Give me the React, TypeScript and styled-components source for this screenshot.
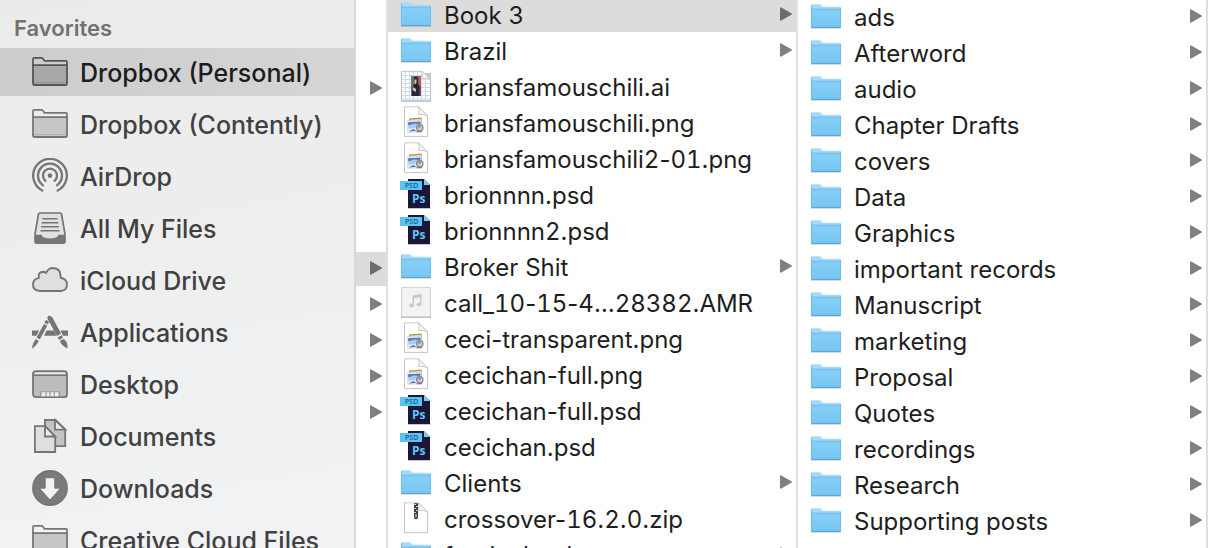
import React from "react";
import styled, { createGlobalStyle } from "styled-components";

const GlobalStyle = createGlobalStyle`
  *, *::before, *::after { box-sizing: border-box; }
  body {
    margin: 0;
    background: #fff;
    color: #232323;
    font-family: Inter, "Liberation Sans", sans-serif;
  }
`;

const Browser = styled.div`
  display: grid;
  grid-template-columns: 356px 32px minmax(0, 1fr) minmax(0, 1fr) 18px;
  height: 100vh;
  overflow: hidden;
`;

const Sidebar = styled.nav`
  overflow: hidden;
  border-right: 2px solid #d9d9da;
  background: linear-gradient(170deg, #ebebeb 0%, #eeeeee 45%, #eff1f3 75%, #f2f2f4 100%);
`;

const SidebarTitle = styled.h2`
  height: 48px;
  margin: 0;
  padding: 14px 14px 0;
  color: #717171;
  font-size: 22px;
  font-weight: 600;
  line-height: 28px;
`;

const SidebarList = styled.ul`
  display: flex;
  flex-direction: column;
  gap: 4px;
  margin: 0;
  padding: 0;
  list-style: none;
`;

const SidebarLink = styled.a<{ $active?: boolean }>`
  display: flex;
  align-items: center;
  gap: 12px;
  height: 48px;
  padding-left: 32px;
  background: ${(p) => (p.$active ? "linear-gradient(90deg, #cccccc, #d5d5d5)" : "none")};
  color: ${(p) => (p.$active ? "#1c1c1c" : "#414141")};
  text-decoration: none;
`;

const SidebarLabel = styled.span`
  padding-top: 2px;
  font-size: 25px;
  font-weight: 500;
  line-height: 32px;
  white-space: nowrap;
`;

const SidebarGlyph = styled.svg<{ $active?: boolean }>`
  flex: none;
  width: 36px;
  height: 36px;
  color: ${(p) => (p.$active ? "#555555" : "#757575")};
`;

const Column = styled.section<{ $scrolled?: boolean }>`
  display: flex;
  flex-direction: column;
  gap: 2px;
  min-width: 0;
  margin-top: ${(p) => (p.$scrolled ? "-2px" : "0")};
  overflow: hidden;
  border-right: 2px solid #dedede;
  background: #fff;
`;

const Row = styled.button<{ $selected?: boolean }>`
  display: flex;
  flex: none;
  align-items: center;
  gap: 12px;
  width: 100%;
  height: 34px;
  padding: 0 4px 0 12px;
  border: 0;
  background: ${(p) => (p.$selected ? "#dcdcdc" : "transparent")};
  color: ${(p) => (p.$selected ? "#6c6c6c" : "#7f7f7f")};
  font: inherit;
  text-align: left;
`;

const EmptyRow = styled.div`
  flex: none;
  height: 34px;
`;

const FileName = styled.span`
  flex: 1;
  min-width: 0;
  padding-top: 2px;
  overflow: hidden;
  color: #1e1e1e;
  font-size: 24px;
  line-height: 32px;
  text-overflow: ellipsis;
  white-space: nowrap;
`;

const Digits = styled.span`
  font-variant-numeric: tabular-nums;
`;

const FileGlyph = styled.svg`
  flex: none;
  width: 32px;
  height: 32px;
  margin-bottom: 2px;
`;

const ArrowGlyph = styled.svg`
  flex: none;
  width: 12px;
  height: 14px;
  margin: 0 0 2px auto;
`;

const Arrow = () => (
  <ArrowGlyph viewBox="0 0 12 14" aria-hidden="true">
    <path d="M0 1.2Q0 0 1.2.5L11.4 6.2Q12.5 7 11.4 7.8L1.2 13.5Q0 14 0 12.8Z" fill="currentColor" />
  </ArrowGlyph>
);

type Kind = "folder" | "ai" | "png" | "psd" | "amr" | "zip";

const Page = () => (
  <>
    <path d="M4 1.5H19L28.2 11V31.3H4Z" fill="#000" opacity=".12" />
    <path d="M4.5.8H18.5L27.5 10V30.4H4.5Z" fill="#fff" stroke="#bdbdbd" strokeWidth=".8" />
    <path d="M18.5.8Q20 5 18.4 8.6Q23.5 7.6 27.5 10Z" fill="#f4f4f4" stroke="#c6c6c6" strokeWidth=".9" />
  </>
);

const drawings: Record<Kind, React.ReactNode> = {
  folder: (
    <>
      <path d="M1 27.2H31V28.8H1Z" fill="#000" opacity=".18" />
      <path d="M1 5.2Q1 4.2 2 4.2H9.6Q10.4 4.2 11 5L12 6.3Q12.4 6.7 13 6.7H30Q31 6.7 31 7.7V27H1Z" fill="#a3dbf9" />
      <path d="M1 9H31V26.8Q31 27.8 30 27.8H2Q1 27.8 1 26.8Z" fill="#7cc9f4" />
      <path d="M1 9H31V17H1Z" fill="#8bd0f6" opacity=".6" />
      <path d="M1 9.1H31" stroke="#69b5e2" strokeWidth=".8" />
      <path d="M1.4 5.5V27M30.6 8V27" stroke="#6cb9e4" strokeWidth=".8" />
      <path d="M1.4 27.5H30.6" stroke="#5aa5d2" strokeWidth="1" />
      <path d="M1.4 26H30.6" stroke="#6fbeeb" strokeWidth=".7" />
    </>
  ),
  ai: (
    <>
      <path d="M1 3H31V32H1Z" fill="#000" opacity=".22" />
      <path d="M1.5 1.3H22L30.5 9.5V30.8H1.5Z" fill="#fbfdff" stroke="#bbb" strokeWidth=".9" />
      <path
        d="M5.5 2V30.5M9.5 2V30.5M13.5 2V30.5M17.5 2V30.5M21.5 2V30.5M25.5 6V30.5M2 5.5H25M2 9.5H29M2 13.5H30M2 17.5H30M2 21.5H30M2 25.5H30M2 29.3H30"
        stroke="#c3dbee"
        strokeWidth=".9"
      />
      <path d="M22 1.3Q23 5 22 8.5Q27 7.7 30.5 9.5Z" fill="#f6f6f6" stroke="#c5c5c5" strokeWidth=".8" />
      <path d="M11 6H21V26H11Z" fill="#8f4a40" />
      <path d="M11 6H14V26H11Z" fill="#6d7566" />
      <path d="M18.5 6H21V16H18.5Z" fill="#c75c48" />
      <path d="M14 7.5Q16.5 5.5 18 8.5V13L19.5 17V26H12V18L14 14Z" fill="#22283b" />
      <path d="M14.5 9.5H16.5V13L15.5 14H14.5Z" fill="#e2c4a8" />
      <path d="M13 17L16 19V22L12.5 20Z" fill="#dcbfa5" />
    </>
  ),
  png: (
    <>
      <Page />
      <g transform="rotate(-4 15 19)">
        <path d="M9.5 12H22V19H9.5Z" fill="#b0905c" />
        <path d="M10.5 13.3H21V18H10.5Z" fill="#efe7d4" />
        <path d="M7.3 14.8H21.5V26H7.3Z" fill="#f8f9fa" stroke="#c4c4c4" strokeWidth=".5" />
        <path d="M8.2 15.8H20.6V19H8.2Z" fill="#4d79c9" />
        <path d="M8.2 19L14 17.5L20.6 18.5V21.5L8.2 22.5Z" fill="#a9cbef" />
        <path d="M8.2 22.3L20.6 21.3V25H8.2Z" fill="#dfe6ee" />
        <path d="M8.2 25L13 22.8L16 25Z" fill="#5b7fb5" />
      </g>
      <circle cx="19.8" cy="21.8" r="3.2" fill="#c6c9cb" stroke="#808285" strokeWidth="1.1" />
      <path d="M18.5 21.3L20.5 20.2M16.5 25.8H22" stroke="#63666a" strokeWidth="1.1" />
    </>
  ),
  psd: (
    <>
      <path d="M8 29H30.5V31H8Z" fill="#000" opacity=".22" />
      <path d="M8 1H24L30 7V30H8Z" fill="#1b1538" />
      <path d="M24 1L30 7H24Z" fill="#6ed2fb" />
      <path d="M0 3H22V12H0Z" fill="#59c4f5" />
      <text x="5" y="10" fontFamily="Open Sans, sans-serif" fontSize="7" fontWeight="600" fill="#1d5f82">PSD</text>
      <text x="12" y="25" fontFamily="Open Sans, sans-serif" fontSize="12" fontWeight="700" fill="#5bc8f7">Ps</text>
    </>
  ),
  amr: (
    <>
      <path d="M1 3H31V32H1Z" fill="#000" opacity=".28" />
      <path d="M1.5 1.5H30.5V30.8H1.5Z" fill="#f3f3f3" stroke="#cfcfcf" strokeWidth=".9" />
      <path d="M13.3 19V10.2L20.8 8.8V18" fill="none" stroke="#c8c8c8" strokeWidth="1.5" />
      <path d="M13 11.5L21 10" stroke="#c8c8c8" strokeWidth="2" />
      <ellipse cx="11.5" cy="19.5" rx="2.4" ry="1.9" fill="#cacaca" />
      <ellipse cx="19" cy="18.3" rx="2.4" ry="1.9" fill="#cacaca" />
    </>
  ),
  zip: (
    <>
      <Page />
      <path d="M14 1.2H18V14.5Q18 17.3 16 17.3Q14 17.3 14 14.5Z" fill="#3c3c3c" />
      <path d="M14.3 2.5H16M16 4.5H17.7M14.3 6.5H16M16 8.5H17.7M14.3 10.5H16" stroke="#d9d9d9" strokeWidth="1" />
      <path d="M15.4 12H16.6V15.3H15.4Z" fill="#d5d5d5" />
    </>
  ),
};

const line = { fill: "none", stroke: "currentColor", strokeWidth: 2 };

const SideFolder = ({ fill }: { fill: string }) => (
  <>
    <path d="M1 11V5Q1 3.8 2.2 3.8H9.5Q10.3 3.8 10.8 4.5L11.8 6Q12.3 6.8 13.2 6.8H33.8Q35 6.8 35 8V11" {...line} strokeWidth="1.7" />
    <path d="M1 11.2H35V29.8Q35 31 33.8 31H2.2Q1 31 1 29.8Z" fill={fill} stroke="currentColor" strokeWidth="1.8" />
    <path d="M2 28.6H34" stroke="currentColor" strokeWidth=".8" opacity=".35" />
  </>
);

const places: { name: string; active?: boolean; art: React.ReactNode }[] = [
  { name: "Dropbox (Personal)", active: true, art: <SideFolder fill="#a8a8a8" /> },
  { name: "Dropbox (Contently)", art: <SideFolder fill="#c6c6c6" /> },
  {
    name: "AirDrop",
    art: (
      <g {...line} strokeWidth="2.3" strokeLinecap="round">
        <path d="M10.3 32.6A16.8 16.8 0 1 1 25.7 32.6" />
        <path d="M11 27.4A12 12 0 1 1 25 27.4" />
        <path d="M13.4 22.9A7 7 0 1 1 22.6 22.9" />
        <circle cx="18" cy="17.6" r="2.3" fill="currentColor" stroke="none" />
      </g>
    ),
  },
  {
    name: "All My Files",
    art: (
      <>
        <path d="M7.5 3H28.5L29.5 4L33 24V32Q33 33.2 31.5 33.2H4.5Q3 33.2 3 32V24L6.5 4Z" fill="#e1e1e1" stroke="currentColor" strokeWidth="1.7" strokeLinejoin="round" />
        <path d="M3 24.7H9.5Q10.5 28.5 18 28.5Q25.5 28.5 26.5 24.7H33V33H3Z" fill="currentColor" />
        <path d="M10.5 8.7H25.5M9.7 12.7H26.3M9.1 16.7H26.9M8.5 20.7H27.5" {...line} strokeWidth="1.6" />
      </>
    ),
  },
  {
    name: "iCloud Drive",
    art: (
      <path
        d="M8 29Q1 28.7 1 22.5Q1 17.3 6.8 15.8Q6 10 11 9.8Q12.5 9.8 14 11Q16.2 6 21.2 6Q29 6.3 28.7 15.8Q35 17 35 22.7Q34.7 28.7 28.5 29Z"
        fill="#dfdfdf"
        stroke="currentColor"
        strokeWidth="1.9"
        strokeLinejoin="round"
      />
    ),
  },
  {
    name: "Applications",
    art: (
      <>
        <path d="M0 16.5H7L4.5 21.8H0ZM14.5 16.5H22L24.5 21.8H12ZM28.5 16.5H36V21.8H31Z" fill="currentColor" />
        <path d="M16.8 1.6L20 2.8L29 19.5L25 22L15.5 4.8Q15 2.6 16.8 1.6Z" fill="currentColor" />
        <path d="M25.8 23.3L29.8 21.2L31 23.7L27 26ZM27.8 27L31.5 25Q36 27.5 35.5 34.5Q29.5 32 27.8 27Z" fill="currentColor" />
        <path d="M13.5 6.5Q15.8 5.8 17 8.2L15.8 10.5L12.5 8.8ZM12 10L15.2 11.7L7.8 25.5L4.5 23.5ZM3.7 25L6.9 26.9L3.8 31.5L.5 34.5L0 34L1 29.8Z" fill="currentColor" />
      </>
    ),
  },
  {
    name: "Desktop",
    art: (
      <>
        <rect x="1" y="5.2" width="34" height="26" rx="3" fill="#bcbcbc" stroke="currentColor" strokeWidth="1.8" />
        <path d="M3 6.4H33V8.2H2.6Z" fill="#ececec" />
        <path d="M1 9.2H35" {...line} strokeWidth="1.6" />
        <path d="M8 25.3H28V30.5H8Z" fill="#9a9a9a" />
        <path d="M9.5 26.3H13.4V30.3H9.5ZM14.6 26.3H17.4V30.3H14.6ZM18.6 26.3H21.7V30.3H18.6ZM22.9 26.3H26.5V30.3H22.9Z" fill="#f0f0f0" />
      </>
    ),
  },
  {
    name: "Documents",
    art: (
      <g stroke="currentColor" strokeWidth="1.8">
        <path d="M12.9 2H23.5L33.2 11.5V28.2H12.9Z" fill="#c2c3c4" />
        <path d="M23 2V11.7H33.2Z" fill="#eceded" />
        <path d="M2.9 8.2H13L23.2 18.5V34H2.9Z" fill="#dddfe1" />
        <path d="M13 8.2V18.5H23.2Z" fill="#eceded" />
      </g>
    ),
  },
  {
    name: "Downloads",
    art: (
      <>
        <circle cx="18" cy="18" r="17" fill="#7b7b7d" stroke="currentColor" strokeWidth="1.8" />
        <path d="M13.2 7.8H22.7V18.2H28.5L18 30L7.5 18.2H13.2Z" fill="#f1f2f4" stroke="#6c6c6c" strokeWidth=".8" />
      </>
    ),
  },
  { name: "Creative Cloud Files", art: <SideFolder fill="#c6c7c9" /> },
];

interface Entry {
  name: string;
  kind: Kind;
  selected?: boolean;
}

const files: Entry[] = [
  { name: "Book 3", kind: "folder", selected: true },
  { name: "Brazil", kind: "folder" },
  { name: "briansfamouschili.ai", kind: "ai" },
  { name: "briansfamouschili.png", kind: "png" },
  { name: "briansfamouschili2-01.png", kind: "png" },
  { name: "brionnnn.psd", kind: "psd" },
  { name: "brionnnn2.psd", kind: "psd" },
  { name: "Broker Shit", kind: "folder" },
  { name: "call_10-15-4…28382.AMR", kind: "amr" },
  { name: "ceci-transparent.png", kind: "png" },
  { name: "cecichan-full.png", kind: "png" },
  { name: "cecichan-full.psd", kind: "psd" },
  { name: "cecichan.psd", kind: "psd" },
  { name: "Clients", kind: "folder" },
  { name: "crossover-16.2.0.zip", kind: "zip" },
  { name: "freelanbook", kind: "folder" },
];

const bookFolders: Entry[] = [
  "ads",
  "Afterword",
  "audio",
  "Chapter Drafts",
  "covers",
  "Data",
  "Graphics",
  "important records",
  "Manuscript",
  "marketing",
  "Proposal",
  "Quotes",
  "recordings",
  "Research",
  "Supporting posts",
].map((name) => ({ name, kind: "folder" }));

// Rows of the leftmost column, of which only the disclosure arrows are in view.
const parentRows = ["", "", "arrow", "", "", "", "", "selected", "arrow", "arrow", "arrow", "arrow"];

// Digits are set tabular; hyphens and dots keep their proportional widths.
const withTabularDigits = (name: string) =>
  name.split(/(\d+)/).map((part, i) => (i % 2 ? <Digits key={i}>{part}</Digits> : part));

const FileRow = ({ name, kind, selected }: Entry) => (
  <Row type="button" $selected={selected}>
    <FileGlyph viewBox="0 0 32 32" aria-hidden="true">{drawings[kind]}</FileGlyph>
    <FileName>{withTabularDigits(name)}</FileName>
    {kind === "folder" && <Arrow />}
  </Row>
);

export default function App() {
  return (
    <>
      <GlobalStyle />
      <Browser>
        <Sidebar>
          <SidebarTitle>Favorites</SidebarTitle>
          <SidebarList>
            {places.map((place) => (
              <li key={place.name}>
                <SidebarLink href="#" $active={place.active}>
                  <SidebarGlyph viewBox="0 0 36 36" $active={place.active} aria-hidden="true">
                    {place.art}
                  </SidebarGlyph>
                  <SidebarLabel>{place.name}</SidebarLabel>
                </SidebarLink>
              </li>
            ))}
          </SidebarList>
        </Sidebar>
        <Column>
          {parentRows.map((state, i) =>
            state ? (
              <Row key={i} type="button" aria-label="Open folder" $selected={state === "selected"}>
                <Arrow />
              </Row>
            ) : (
              <EmptyRow key={i} />
            )
          )}
        </Column>
        <Column $scrolled>
          {files.map((file) => (
            <FileRow key={file.name} {...file} />
          ))}
        </Column>
        <Column>
          {bookFolders.map((folder) => (
            <FileRow key={folder.name} {...folder} />
          ))}
        </Column>
      </Browser>
    </>
  );
}
